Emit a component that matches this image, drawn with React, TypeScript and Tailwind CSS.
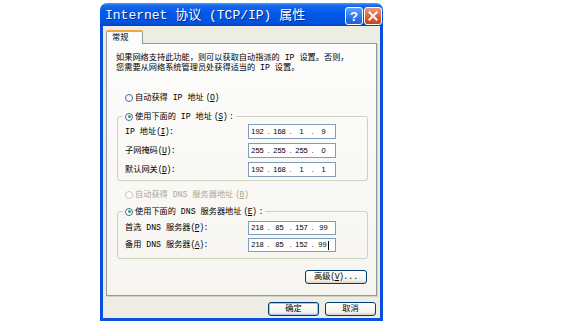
import { Fragment, type ReactNode } from "react";

const cjk = "font-['Liberation_Mono','Noto_Sans_CJK_SC',monospace]";

// access key, drawn tight like the bitmap font
function Mn({ k }: { k: string }) {
  return (
    <span className="tracking-[-0.6px]">
      (<u>{k}</u>)
    </span>
  );
}

function Radio({
  checked,
  disabled,
  children,
}: {
  checked?: boolean;
  disabled?: boolean;
  children: ReactNode;
}) {
  return (
    <span
      className={`inline-flex items-center gap-[2px] ${
        disabled ? "text-[#ACA899]" : "text-black"
      }`}
    >
      <span
        className={`flex h-[8px] w-[8px] items-center justify-center rounded-full border bg-white ${
          disabled ? "border-[#CAC8BB]" : "border-[#3D6CA8]"
        }`}
      >
        {checked && <span className="h-[3px] w-[3px] rounded-full bg-[#2FA842]" />}
      </span>
      {children}
    </span>
  );
}

function IpBox({ parts, caret, tall }: { parts: string[]; caret?: boolean; tall?: boolean }) {
  return (
    <div
      className={`flex w-[88px] items-center border border-[#7F9DB9] bg-white font-['Liberation_Sans',sans-serif] text-[7.5px] text-black ${
        tall ? "h-[15px]" : "h-[14px]"
      }`}
    >
      {parts.map((p, i) => (
        <Fragment key={i}>
          {i > 0 && <span className="w-[5px] text-center">.</span>}
          <span className="w-[17px] text-center">
            {p}
            {caret && i === parts.length - 1 && (
              <span className="ml-[1px] inline-block h-[9px] w-px bg-black align-middle" />
            )}
          </span>
        </Fragment>
      ))}
    </div>
  );
}

function Row({ label, children, tall }: { label: ReactNode; children: ReactNode; tall?: boolean }) {
  return (
    <div className={`flex items-center ${tall ? "h-[15px]" : "h-[14px]"}`}>
      <span className="w-[125px] pl-[2px]">{label}</span>
      {children}
    </div>
  );
}

function XpButton({ children, width, def }: { children: ReactNode; width: string; def?: boolean }) {
  return (
    <button
      className={`flex h-[14px] items-center justify-center rounded-[3px] border border-[#003C74] bg-[linear-gradient(to_bottom,#FFFFFF,#F3F3EE_75%,#D8D3C8)] text-[8.2px] leading-none text-black ${width} ${
        def ? "shadow-[inset_0_0_0_1px_#A9C4EE]" : ""
      }`}
    >
      {children}
    </button>
  );
}

export default function App() {
  return (
    <div className={`h-[325px] w-[585px] bg-white pl-[100px] pt-[3px] ${cjk}`}>
      <div className="flex h-[318px] w-[283px] flex-col">
        {/* TITLE BAR */}
        <div className="flex h-[23px] items-start justify-between rounded-t-[7px] bg-[linear-gradient(to_bottom,#4A98F8_0%,#1466EC_12%,#0058E8_50%,#0252DE_85%,#0044C4_100%)] pl-[5px] pr-[1px]">
          <span className="text-[13px] leading-[25px] text-white [text-shadow:1px_1px_0_#0A2A8A]">
            Internet 协议 (TCP/IP) 属性
          </span>
          <div className="mb-[1px] flex gap-[1px] self-end">
            <div className="flex h-[18px] w-[18px] items-center justify-center rounded-[3px] border border-white bg-[linear-gradient(to_bottom,#5FA3FA,#2A74EE_60%,#1E5FDA)] font-['Liberation_Sans',sans-serif] text-[13px] font-bold leading-none text-white">
              ?
            </div>
            <div className="flex h-[18px] w-[18px] items-center justify-center rounded-[3px] border border-white bg-[linear-gradient(to_bottom,#EE9A7C,#E0603A_50%,#C84520)]">
              <svg width="10" height="10" viewBox="0 0 10 10">
                <path d="M1.5 1.5 L8.5 8.5 M8.5 1.5 L1.5 8.5" stroke="white" strokeWidth="2" strokeLinecap="square" />
              </svg>
            </div>
          </div>
        </div>

        {/* BODY */}
        <div className="flex flex-1 flex-col border-x-[3px] border-b-[3px] border-[#0B4FDD] bg-[#EEEDE4] px-[3px] pt-[4px] text-[8.2px] leading-[10px]">
          <div className="relative z-10 -mb-px flex h-[14px] w-[37px] items-center rounded-t-[2px] border-x border-t-2 border-x-[#919B9C] border-t-[#F5A53B] bg-[#FBFBF9] pl-[5px]">
            常规
          </div>

          <div className="flex h-[253px] flex-col border border-[#919B9C] bg-[linear-gradient(to_bottom,#FCFCFB,#F6F5F0)] shadow-[1px_1px_0_#D4D1C4]">
            <p className="pl-[9px] pt-[9px]">
              如果网络支持此功能，则可以获取自动指派的 IP 设置。否则，
              <br />
              您需要从网络系统管理员处获得适当的 IP 设置。
            </p>

            <div className="mt-[20px] h-[10px] pl-[18px]">
              <Radio>
                自动获得 IP 地址<Mn k="O" />
              </Radio>
            </div>

            <fieldset className="mt-[8px] ml-[10px] mr-[8px] rounded-[3px] border border-[#D0D0BF] pb-[3px] pl-[5px] pt-[3px]">
              <legend className="h-[10px] px-[2px]">
                <Radio checked>
                  使用下面的 IP 地址<Mn k="S" />:
                </Radio>
              </legend>
              <div className="flex flex-col gap-[4px]">
                <Row tall label={<>IP 地址<Mn k="I" />:</>}>
                  <IpBox tall parts={["192", "168", "1", "9"]} />
                </Row>
                <Row tall label={<>子网掩码<Mn k="U" />:</>}>
                  <IpBox tall parts={["255", "255", "255", "0"]} />
                </Row>
                <Row tall label={<>默认网关<Mn k="D" />:</>}>
                  <IpBox tall parts={["192", "168", "1", "1"]} />
                </Row>
              </div>
            </fieldset>

            <div className="mt-[9px] h-[10px] pl-[18px]">
              <Radio disabled>
                自动获得 DNS 服务器地址<Mn k="B" />
              </Radio>
            </div>

            <fieldset className="mt-[6px] ml-[10px] mr-[8px] rounded-[3px] border border-[#D0D0BF] pb-[6px] pl-[5px] pt-[5px]">
              <legend className="h-[10px] px-[2px]">
                <Radio checked>
                  使用下面的 DNS 服务器地址<Mn k="E" />:
                </Radio>
              </legend>
              <div className="flex flex-col gap-[3px]">
                <Row label={<>首选 DNS 服务器<Mn k="P" />:</>}>
                  <IpBox parts={["218", "85", "157", "99"]} />
                </Row>
                <Row label={<>备用 DNS 服务器<Mn k="A" />:</>}>
                  <IpBox caret parts={["218", "85", "152", "99"]} />
                </Row>
              </div>
            </fieldset>

            <div className="mr-[9px] mt-[11px] self-end">
              <XpButton width="w-[62px]">
                高级<Mn k="V" />...
              </XpButton>
            </div>
          </div>

          {/* BUTTONS */}
          <div className="mt-[6px] flex justify-end gap-[6px] pr-[1px]">
            <XpButton def width="w-[51px]">
              确定
            </XpButton>
            <XpButton width="w-[51px]">取消</XpButton>
          </div>
        </div>
      </div>
    </div>
  );
}
